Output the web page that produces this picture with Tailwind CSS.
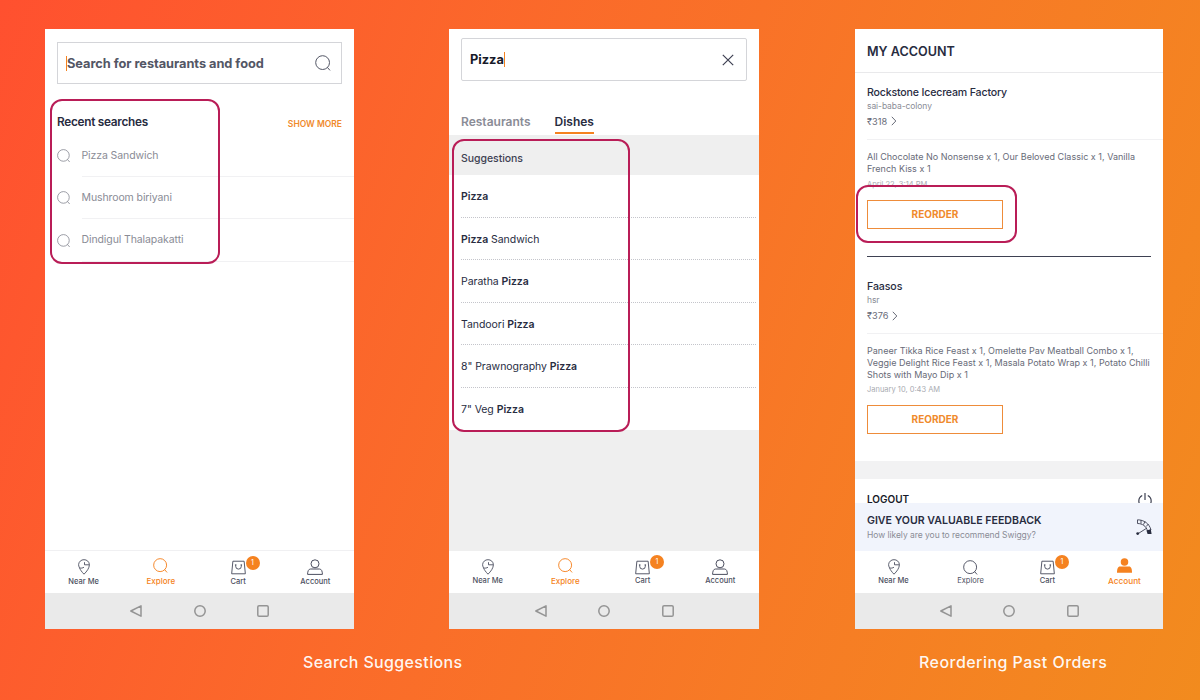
<!DOCTYPE html>
<html lang="en">
  <head>
    <meta charset="UTF-8" />
    <title>Search Suggestions</title>
    <script src="https://cdn.jsdelivr.net/npm/@tailwindcss/browser@4"></script>
  </head>
  <body class="w-[1200px] h-[700px] overflow-hidden bg-linear-110 from-[#ff502f] to-[#f28b1e] font-['Inter',sans-serif] text-[#282c3f]">
    <!-- Icons -->
    <svg class="hidden">
      <symbol id="search" viewBox="0 0 16 16">
        <circle cx="7.6" cy="7.6" r="6.9" fill="none" stroke="currentColor" />
        <path d="M12.2 12.2l2.8 3.2" fill="none" stroke="currentColor" />
      </symbol>
      <symbol id="pin" viewBox="0 0 12 16">
        <path d="M6 15.200C3.800 12.900 2.200 10.800 1.500 8.800.9 7.500.6 6.600.6 5.700A5.200 5.200 0 0 1 6 .7a5.200 5.200 0 0 1 5.400 5c0 3.300-2.600 6.800-5.400 9.500zM1.500 8.800c1.500.6 3.200.3 4.500-.6M6.500 3.200v2.600h4.800" fill="none" stroke="currentColor" stroke-width=".9" />
      </symbol>
      <symbol id="cart" viewBox="0 0 16 16">
        <path d="M2 1.300h12l1.300 13.400H.7z" fill="none" stroke="currentColor" stroke-linejoin="round" />
        <path d="M5 5.200v1.500a3 3 0 0 0 6 0V5.200M4.200 5.200h1.600M10.200 5.200h1.600" fill="none" stroke="currentColor" />
      </symbol>
      <symbol id="user" viewBox="0 0 16 16">
        <circle cx="8" cy="4.800" r="4" fill="none" stroke="currentColor" />
        <path d="M.6 15.400c0-3.200.9-5.400 3-5.400h8.800c2.100 0 3 2.200 3 5.400z" fill="none" stroke="currentColor" stroke-linejoin="round" />
      </symbol>
      <symbol id="user-solid" viewBox="0 0 16 16">
        <circle cx="8" cy="4.200" r="4" fill="currentColor" />
        <path d="M0 15.800c0-4.300.9-6.800 3.200-6.800h9.600c2.300 0 3.200 2.500 3.200 6.800z" fill="currentColor" />
      </symbol>
      <symbol id="back" viewBox="0 0 12 12">
        <path d="M11 .8v10.400L.8 6z" fill="none" stroke="currentColor" stroke-width="1.500" stroke-linejoin="round" />
      </symbol>
      <symbol id="home" viewBox="0 0 12 12">
        <circle cx="6" cy="6" r="5.200" fill="none" stroke="currentColor" stroke-width="1.500" />
      </symbol>
      <symbol id="recents" viewBox="0 0 12 12">
        <rect x=".8" y=".8" width="10.400" height="10.400" rx="1.300" fill="none" stroke="currentColor" stroke-width="1.500" />
      </symbol>
      <symbol id="chevron" viewBox="0 0 6 10">
        <path d="M.8.8l4 4.200-4 4.200" fill="none" stroke="currentColor" />
      </symbol>
    </svg>

    <main class="flex pt-[29px] pl-[45px]">
      <!-- Recent searches -->
      <section class="relative flex flex-col w-[309px] h-[600px] bg-white">
        <div class="flex items-center justify-between mx-3 mt-[13px] h-[42px] shrink-0 border border-[#d4d5d9] pl-2 pr-[10px]">
          <p class="border-l border-[#f58220] text-[12.800px] leading-[15px] font-bold text-[#535665] whitespace-nowrap -tracking-[0.040px]">Search for restaurants and food</p>
          <svg class="size-4 text-[#535665]"><use href="#search" /></svg>
        </div>
        <div class="flex items-center justify-between px-3 mt-[28px] h-5">
          <h2 class="mt-0.5 text-[11.800px] font-semibold -tracking-[0.280px]">Recent searches</h2>
          <span class="mt-1 text-[8.500px] font-semibold text-[#f08a2c]">SHOW MORE</span>
        </div>
        <ul class="mt-[2.500px] text-[10.500px] leading-[42.400px] text-[#8a8c96] -tracking-[0.100px]">
          <li class="flex h-[42.400px] pl-3">
            <svg class="size-[13.500px] mt-[14.500px]"><use href="#search" /></svg>
            <p class="ml-[11px] flex-1 border-b border-[#f1f1f3]">Pizza Sandwich</p>
          </li>
          <li class="flex h-[42.400px] pl-3">
            <svg class="size-[13.500px] mt-[14.500px]"><use href="#search" /></svg>
            <p class="ml-[11px] flex-1 border-b border-[#f1f1f3]">Mushroom biriyani</p>
          </li>
          <li class="flex h-[42.400px] pl-3">
            <svg class="size-[13.500px] mt-[14.500px]"><use href="#search" /></svg>
            <p class="ml-[11px] flex-1 border-b border-[#f1f1f3]">Dindigul Thalapakatti</p>
          </li>
        </ul>
        <nav class="mt-auto grid grid-cols-4 h-[43px] border-t border-[#f0f0f2] text-[7.500px] leading-[10px] font-medium text-[#4c4f60]">
          <a class="flex flex-col items-center pt-2"><svg class="w-3 h-4"><use href="#pin" /></svg><span class="mt-[1.500px]">Near Me</span></a>
          <a class="flex flex-col items-center pt-[7px] text-[#f58220]"><svg class="size-[15px]"><use href="#search" /></svg><span class="mt-[2.500px] text-[8px]">Explore</span></a>
          <a class="relative flex flex-col items-center pt-[9px]"><svg class="size-[15px]"><use href="#cart" /></svg><span class="mt-[1.500px]">Cart</span><b class="absolute left-[46px] top-[4.500px] size-[14px] rounded-full bg-[#f58220] text-center text-[7px] leading-[14px] font-normal text-white">1</b></a>
          <a class="flex flex-col items-center pt-[8px]"><svg class="size-4"><use href="#user" /></svg><span class="mt-[1.500px]">Account</span></a>
        </nav>
        <div class="flex items-center justify-center gap-[51.500px] h-9 bg-[#eaeaea] text-[#949494]">
          <svg class="size-3"><use href="#back" /></svg>
          <svg class="size-3"><use href="#home" /></svg>
          <svg class="size-3"><use href="#recents" /></svg>
        </div>
        <div class="absolute left-[5px] top-[70px] w-[170px] h-[165px] rounded-xl border-2 border-[#b91d57]"></div>
      </section>

      <!-- Dish suggestions -->
      <section class="relative ml-[95px] flex flex-col w-[310px] h-[600px] bg-[#efefef]">
        <div class="bg-white h-[105.500px] pt-[9px] px-3">
          <div class="flex items-center justify-between h-[43px] border border-[#d4d5d9] rounded-xs pl-2 pr-3">
            <p class="border-r border-[#f58220] text-[12.800px] leading-[15px] font-bold text-[#171a29]">Pizza</p>
            <svg class="size-3 text-[#3e4152]" viewBox="0 0 12 12"><path d="M.8.8l10.400 10.400M11.200.8L.8 11.200" fill="none" stroke="currentColor" stroke-width="1.200" /></svg>
          </div>
          <div class="flex gap-6 mt-[32px] text-[12px] leading-[18px] font-semibold">
            <span class="text-[#8a8c96]">Restaurants</span>
            <span class="h-[21px] border-b-2 border-[#f58220]">Dishes</span>
          </div>
        </div>
        <h3 class="h-[40.500px] pl-3 text-[10.500px] leading-[47px] font-medium text-[#3e4152] -tracking-[0.050px]">Suggestions</h3>
        <ul class="bg-white pl-3 pr-[3px] text-[10.500px] leading-[43px] -tracking-[0.050px]">
          <li class="h-[42.500px] border-b border-dotted border-[#c4c5cb]"><b class="font-semibold">Pizza</b></li>
          <li class="h-[42.500px] border-b border-dotted border-[#c4c5cb]"><b class="font-semibold">Pizza</b> Sandwich</li>
          <li class="h-[42.500px] border-b border-dotted border-[#c4c5cb]">Paratha <b class="font-semibold">Pizza</b></li>
          <li class="h-[42.500px] border-b border-dotted border-[#c4c5cb]">Tandoori <b class="font-semibold">Pizza</b></li>
          <li class="h-[42.500px] border-b border-dotted border-[#c4c5cb]">8" Prawnography <b class="font-semibold">Pizza</b></li>
          <li class="h-[42.500px]">7" Veg <b class="font-semibold">Pizza</b></li>
        </ul>
        <nav class="mt-auto grid grid-cols-4 h-[42px] bg-white text-[7.500px] leading-[10px] font-medium text-[#4c4f60]">
          <a class="flex flex-col items-center pt-2"><svg class="w-3 h-4"><use href="#pin" /></svg><span class="mt-px">Near Me</span></a>
          <a class="flex flex-col items-center pt-[7px] text-[#f58220]"><svg class="size-[15px]"><use href="#search" /></svg><span class="mt-[2.500px] text-[8px]">Explore</span></a>
          <a class="relative flex flex-col items-center pt-[9px]"><svg class="size-[15px]"><use href="#cart" /></svg><span class="mt-px">Cart</span><b class="absolute left-[46px] top-1 size-[14px] rounded-full bg-[#f58220] text-center text-[7px] leading-[14px] font-normal text-white">1</b></a>
          <a class="flex flex-col items-center pt-[8px]"><svg class="size-4"><use href="#user" /></svg><span class="mt-px">Account</span></a>
        </nav>
        <div class="flex items-center justify-center gap-[51.500px] h-9 bg-[#eaeaea] text-[#949494]">
          <svg class="size-3"><use href="#back" /></svg>
          <svg class="size-3"><use href="#home" /></svg>
          <svg class="size-3"><use href="#recents" /></svg>
        </div>
        <div class="absolute left-[3px] top-[110px] w-[178px] h-[293px] rounded-xl border-2 border-[#b91d57]"></div>
      </section>

      <!-- Past orders -->
      <section class="relative ml-[96px] flex flex-col w-[308px] h-[600px] bg-white">
        <h2 class="h-[43.500px] shrink-0 border-b border-[#e9e9eb] pl-3 text-[12.600px] leading-[45px] font-semibold">MY ACCOUNT</h2>
        <article class="pl-3 h-[183px]">
          <h3 class="mt-[12.500px] text-[10.600px] leading-4 font-medium -tracking-[0.170px]">Rockstone Icecream Factory</h3>
          <p class="text-[8.500px] leading-[10px] text-[#8a8c96] -tracking-[0.080px]">sai-baba-colony</p>
          <p class="mt-[3.500px] flex items-center gap-1 text-[9.200px] leading-[13px] text-[#686b78]">₹318 <svg class="w-1.5 h-2.5"><use href="#chevron" /></svg></p>
          <p class="mt-[11px] border-t border-[#f1f1f3] pt-[11px] text-[9px] leading-3 text-[#686b78] tracking-[0.015px]">
            All Chocolate No Nonsense x 1, Our Beloved Classic x 1, Vanilla<br />French Kiss x 1
          </p>
          <p class="mt-[5px] h-[7px] text-[7.500px] leading-[10px] text-[#a9abb2]">April 22, 3:14 PM</p>
          <button class="mt-[13px] block w-[136px] h-[29px] border border-[#ee8c3a] text-[10px] font-bold text-[#f08a2c]">REORDER</button>
        </article>
        <article class="ml-3 h-[205.500px]">
          <hr class="mr-3 border-t-[1.500px] border-[#3e4152]" />
          <h3 class="mt-[22.500px] text-[10.600px] leading-4 font-medium -tracking-[0.100px]">Faasos</h3>
          <p class="text-[8.500px] leading-[10px] text-[#8a8c96] -tracking-[0.080px]">hsr</p>
          <p class="mt-1 flex items-center gap-1 text-[9.200px] leading-[13px] text-[#686b78]">₹376 <svg class="w-1.5 h-2.5"><use href="#chevron" /></svg></p>
          <p class="mt-[10.500px] border-t border-[#f1f1f3] pt-[11px] text-[9px] leading-3 text-[#686b78] whitespace-nowrap tracking-[0.015px]">
            Paneer Tikka Rice Feast x 1, Omelette Pav Meatball Combo x 1,<br />Veggie Delight Rice Feast x 1, Masala Potato Wrap x 1, Potato Chilli<br />Shots with Mayo Dip x 1
          </p>
          <p class="mt-[4px] text-[7.500px] leading-[10px] text-[#a9abb2]">January 10, 0:43 AM</p>
          <button class="mt-[10px] block w-[136px] h-[29px] border border-[#ee8c3a] text-[10px] font-bold text-[#f08a2c]">REORDER</button>
        </article>
        <div class="h-[18px] bg-[#f2f2f3]"></div>
        <div class="flex justify-between h-[24px] overflow-hidden pl-3 pr-[11px] pt-[13px]">
          <span class="text-[10px] leading-[14px] font-semibold text-[#171a29]">LOGOUT</span>
          <svg class="mt-px w-3.5 h-3.5" viewBox="0 0 14 14"><path d="M7 0v7M4.200 2.500C-.5 5-.3 12 5 13.300M9.800 2.500C14.500 5 14.300 12 9 13.300" fill="none" stroke="#3e4152" stroke-width="1.200" /></svg>
        </div>
        <div class="flex items-center justify-between flex-1 bg-[#f1f4fc] pl-3 pr-[11px]">
          <div>
            <h3 class="text-[10.600px] leading-4 font-semibold">GIVE YOUR VALUABLE FEEDBACK</h3>
            <p class="text-[8.500px] leading-3 text-[#8a8c96] -tracking-[0.040px]">How likely are you to recommend Swiggy?</p>
          </div>
          <svg class="w-4 h-4" viewBox="0 0 16 16">
            <path d="M1.500.8C8 .8 13.500 4.800 15 11l-3.500 1C10.300 7.300 6.500 4.500 1.500 4.500zM5 1v3.600M9 2.300L7.500 5.600M12.500 5L10 7.600M1.500 15L11 9" fill="none" stroke="#3e4152" stroke-width=".9" />
            <path d="M10.500 11.500l4.300-1.200.8 4.700h-4z" fill="#282c3f" />
            <circle cx="1.700" cy="14.600" r="1.400" fill="#282c3f" />
          </svg>
        </div>
        <nav class="grid grid-cols-4 h-[42.500px] text-[7.500px] leading-[10px] font-medium text-[#4c4f60]">
          <a class="flex flex-col items-center pt-2"><svg class="w-3 h-4"><use href="#pin" /></svg><span class="mt-[1.500px]">Near Me</span></a>
          <a class="flex flex-col items-center pt-[9px] font-normal"><svg class="size-[15px]"><use href="#search" /></svg><span class="mt-[1.500px]">Explore</span></a>
          <a class="relative flex flex-col items-center pt-[9px]"><svg class="size-[15px]"><use href="#cart" /></svg><span class="mt-[1.500px]">Cart</span><b class="absolute left-[46px] top-[4.500px] size-[14px] rounded-full bg-[#f58220] text-center text-[7px] leading-[14px] font-normal text-white">1</b></a>
          <a class="flex flex-col items-center pt-[7px] text-[#f58220]"><svg class="size-[15px]"><use href="#user-solid" /></svg><span class="mt-[3.500px] text-[8.200px]">Account</span></a>
        </nav>
        <div class="flex items-center justify-center gap-[51.500px] h-9 bg-[#eaeaea] text-[#949494]">
          <svg class="size-3"><use href="#back" /></svg>
          <svg class="size-3"><use href="#home" /></svg>
          <svg class="size-3"><use href="#recents" /></svg>
        </div>
        <div class="absolute left-px top-[156px] w-[161px] h-[58px] rounded-xl border-2 border-[#b91d57]"></div>
      </section>
    </main>

    <footer class="flex pl-[303px] pt-[22px] text-[16px] leading-[22px] font-medium text-white/95">
      <p class="w-[616px] tracking-[0.350px]">Search Suggestions</p>
      <p class="tracking-[0.450px]">Reordering Past Orders</p>
    </footer>
  </body>
</html>
